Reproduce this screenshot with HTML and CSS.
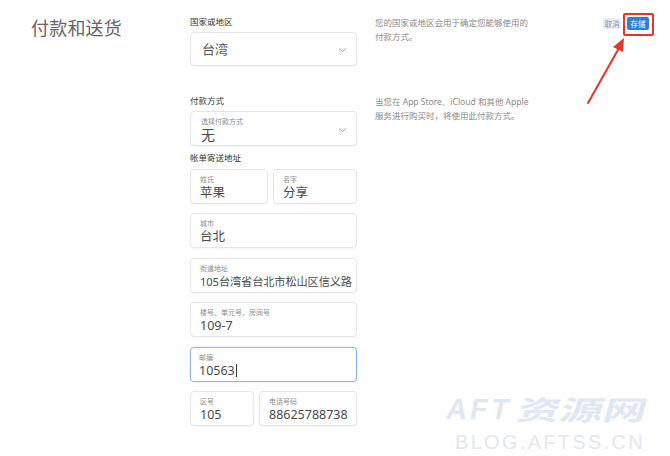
FILE: index.html
```html
<!DOCTYPE html>
<html lang="zh-CN">
<head>
<meta charset="utf-8">
<link rel="stylesheet" href="styles.css">
</head>
<body>
<div class="page">
  <section class="sec sec-country">
    <h1 class="title">付款和送货</h1>
    <div class="group">
      <div class="glabel">国家或地区</div>
      <div class="field select single">
        <span class="val">台湾</span>
        <svg class="chev" width="9" height="6" viewBox="0 0 9 6"><path d="M1 1.5 L4.5 4.5 L8 1.5" fill="none" stroke="#a8a8a8" stroke-width="1"/></svg>
      </div>
    </div>
    <p class="desc">您的国家或地区会用于确定您能够使用的<br>付款方式。</p>
    <div class="actions">
      <button class="btn btn-cancel">取消</button>
      <button class="btn btn-save">存储</button>
    </div>
  </section>

  <section class="sec sec-pay">
    <div></div>
    <div class="group">
      <div class="glabel">付款方式</div>
      <div class="field select">
        <div class="fbody">
          <span class="lab">选择付款方式</span>
          <span class="val">无</span>
        </div>
        <svg class="chev" width="9" height="6" viewBox="0 0 9 6"><path d="M1 1.5 L4.5 4.5 L8 1.5" fill="none" stroke="#a8a8a8" stroke-width="1"/></svg>
      </div>
      <div class="glabel glabel-addr">帐单寄送地址</div>
      <div class="stack">
        <div class="pair">
          <div class="field"><span class="lab">姓氏</span><span class="val">苹果</span></div>
          <div class="field"><span class="lab">名字</span><span class="val">分享</span></div>
        </div>
        <div class="field"><span class="lab">城市</span><span class="val">台北</span></div>
        <div class="field"><span class="lab">街道地址</span><span class="val small">105台湾省台北市松山区信义路</span></div>
        <div class="field"><span class="lab">楼号、单元号、房间号</span><span class="val">109-7</span></div>
        <div class="field focus"><span class="lab">邮编</span><span class="val">10563<span class="caret"></span></span></div>
        <div class="pair pair-phone">
          <div class="field"><span class="lab">区号</span><span class="val">105</span></div>
          <div class="field"><span class="lab">电话号码</span><span class="val">88625788738</span></div>
        </div>
      </div>
    </div>
    <p class="desc">当您在 App Store、iCloud 和其他 Apple<br>服务进行购买时，将使用此付款方式。</p>
  </section>
</div>

<div class="highlight"></div>
<svg class="arrow" width="60" height="80" viewBox="0 0 60 80">
  <line x1="6" y1="73" x2="37" y2="18" stroke="#e8352c" stroke-width="2" stroke-linecap="round"/>
  <polygon points="42,8 31,17 41,22" fill="#e8352c"/>
</svg>

<div class="watermark">
  <div class="wm-big"><span class="wm-lat">AFT</span><span class="wm-cjk">资源网</span></div>
  <div class="wm-small">BLOG.AFTSS.CN</div>
</div>
</body>
</html>
```
FILE: styles.css
```css
* { box-sizing: border-box; }
html, body { margin: 0; padding: 0; background: #fff; }
body {
  width: 670px;
  height: 456px;
  overflow: hidden;
  font-family: "Noto Sans", "Noto Sans CJK SC", sans-serif;
  color: #444;
  position: relative;
}
.page { padding: 16px 21px 0 31px; }
.sec {
  display: grid;
  grid-template-columns: 159px 167px 184px 1fr;
  align-items: start;
}
.sec-pay { margin-top: 29px; }
.title {
  margin: 0;
  font-weight: 400;
  font-size: 18px;
  line-height: 24px;
  color: #666;
  letter-spacing: 0.2px;
}
.group { display: flex; flex-direction: column; }
.glabel {
  font-size: 8.5px;
  line-height: 12px;
  color: #333;
  margin-bottom: 4px;
}
.glabel-addr { margin-top: 6px; margin-bottom: 5px; }
.desc {
  margin: 0 0 0 18px;
  font-size: 8.5px;
  line-height: 14px;
  color: #8a8a8a;
  white-space: nowrap;
}
.actions {
  display: flex;
  justify-content: flex-end;
  align-items: center;
  gap: 6px;
  padding-top: 1px;
}
.btn {
  border: none;
  font-family: inherit;
  font-size: 7.5px;
  line-height: 10px;
  padding: 0;
  border-radius: 2px;
}
.btn-cancel {
  width: 18px;
  height: 11px;
  background: #eceff4;
  color: #7b93b3;
}
.btn-save {
  width: 22px;
  height: 13px;
  background: #2f7ed8;
  color: #fff;
}
.field {
  height: 35px;
  border: 1px solid #e6e6e6;
  border-radius: 4px;
  box-shadow: 0 1px 2px rgba(0,0,0,0.04);
  padding: 5px 8px 0 9px;
  display: flex;
  flex-direction: column;
  overflow: hidden;
  background: #fff;
}
.field .lab {
  font-size: 7px;
  line-height: 10px;
  color: #8d8d8d;
  white-space: nowrap;
}
.field .val {
  font-size: 12.5px;
  line-height: 15px;
  color: #4a4a4a;
  white-space: nowrap;
}
.field .val.small { font-size: 11.2px; letter-spacing: -0.1px; }
.select {
  flex-direction: row;
  align-items: center;
  justify-content: space-between;
  padding: 0 9px 0 10px;
}
.select.single { height: 34px; }
.select .fbody { display: flex; flex-direction: column; padding-top: 1px; }
.select.single .val { font-size: 13px; padding-left: 1px; color: #555; }
.select .fbody .val { font-size: 14px; line-height: 15px; }
.chev { margin-top: 2px; }
.stack { display: flex; flex-direction: column; gap: 9.4px; }
.pair { display: flex; gap: 5px; }
.pair .field { flex: 0 0 78px; }
.pair .field + .field { flex: 1; }
.pair-phone .field { flex: 0 0 64px; }
.focus {
  border: 1.5px solid #8eb6e6;
  box-shadow: 0 0 2px rgba(80,140,220,0.35);
  padding-left: 8px;
}
.caret {
  display: inline-block;
  width: 1px;
  height: 13px;
  background: #333;
  vertical-align: -2px;
  margin-left: 1px;
}
.highlight {
  position: absolute;
  left: 623px;
  top: 13px;
  width: 31px;
  height: 23px;
  border: 2px solid #e8352c;
  border-radius: 2px;
}
.arrow {
  position: absolute;
  left: 582px;
  top: 30px;
}
.watermark {
  position: absolute;
  left: 446px;
  top: 393px;
  width: 210px;
  pointer-events: none;
}
.wm-big {
  display: flex;
  align-items: center;
  height: 32px;
  color: #dfe8f2;
}
.wm-lat {
  font-family: "Liberation Sans", sans-serif;
  font-weight: 700;
  font-style: italic;
  font-size: 29px;
  letter-spacing: 3px;
  line-height: 32px;
}
.wm-cjk {
  display: inline-block;
  font-family: "Noto Sans CJK SC", sans-serif;
  font-weight: 700;
  font-size: 27px;
  line-height: 32px;
  letter-spacing: 0;
  transform: scaleX(1.6) skewX(-10deg);
  transform-origin: left center;
  margin-left: 7px;
}
.wm-small {
  font-family: "Liberation Sans", sans-serif;
  font-size: 20px;
  line-height: 22px;
  color: #e4e8ed;
  letter-spacing: 2.3px;
  margin: 6px 0 0 9px;
}
```
